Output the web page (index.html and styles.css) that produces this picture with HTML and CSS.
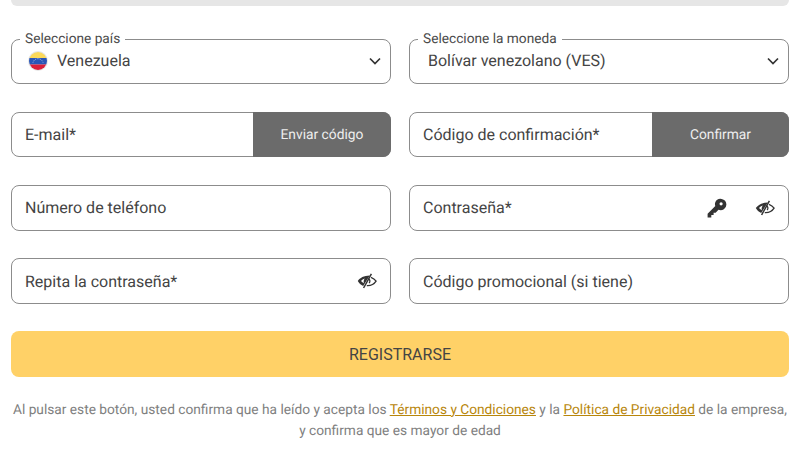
FILE: index.html
```html
<!DOCTYPE html>
<html lang="es">
<head>
<meta charset="utf-8">
<title>Registro</title>
<link rel="stylesheet" href="styles.css">
</head>
<body>
<div class="page">
  <div class="topbar"></div>
  <form class="form">
    <div class="grid">
      <div class="field select">
        <span class="legend">Seleccione país</span>
        <svg class="flag" viewBox="0 0 20 20" width="20" height="20" aria-hidden="true">
          <defs><clipPath id="c"><circle cx="10" cy="10" r="9"/></clipPath></defs>
          <circle cx="10" cy="10" r="10" fill="#e6e6e6"/>
          <g clip-path="url(#c)">
            <rect width="20" height="7" fill="#fcd95a"/>
            <rect y="7" width="20" height="6.500" fill="#2a56b8"/>
            <rect y="13.500" width="20" height="6.500" fill="#dc1f3a"/>
          </g>
          <path d="M5 11.500a5.200 5.200 0 0 1 10 0" fill="none" stroke="#dfe6f5" stroke-width=".8" stroke-dasharray=".8 1"/>
        </svg>
        <span class="value">Venezuela</span>
        <svg class="chev" viewBox="0 0 12 8" width="12" height="8" aria-hidden="true"><path d="M1 1.500l5 5 5-5" fill="none" stroke="#333" stroke-width="1.700"/></svg>
      </div>
      <div class="field select">
        <span class="legend">Seleccione la moneda</span>
        <span class="value currency">Bolívar venezolano (VES)</span>
        <svg class="chev" viewBox="0 0 12 8" width="12" height="8" aria-hidden="true"><path d="M1 1.500l5 5 5-5" fill="none" stroke="#333" stroke-width="1.700"/></svg>
      </div>
      <div class="field">
        <span class="text">E-mail*</span>
        <span class="action action-email">Enviar código</span>
      </div>
      <div class="field">
        <span class="text">Código de confirmación*</span>
        <span class="action action-confirm">Confirmar</span>
      </div>
      <div class="field"><span class="text">Número de teléfono</span></div>
      <div class="field">
        <span class="text">Contraseña*</span>
        <svg class="key" viewBox="0 0 20 20" width="20" height="20" aria-hidden="true"><path d="M19.400 6.400a5.800 5.800 0 0 0-11.200-1.900c-.4 1.200-.3 2.500.1 3.600L.6 15.800v3.600h3.700v-2.300h2.300v-2.300h2l2.900-3a5.800 5.800 0 0 0 7.900-5.400zm-3.700-.6a1.600 1.600 0 1 1-3.200 0 1.600 1.600 0 0 1 3.200 0z" fill="#333" fill-rule="evenodd"/></svg>
        <svg class="eye" viewBox="0 0 20 16" width="20" height="16" aria-hidden="true"><use href="#eye-off"/></svg>
      </div>
      <div class="field">
        <span class="text">Repita la contraseña*</span>
        <svg class="eye" viewBox="0 0 20 16" width="20" height="16" aria-hidden="true">
          <g id="eye-off">
            <path d="M.8 8C3 4.800 6.800 2.600 12.800 2.500L6.200 13C3.800 12 2 10.200.8 8zm3.200 0c.9 1 1.800 1.700 2.900 2.200-.5-1.700-.2-3.400.9-4.800C6.200 6 5 6.800 4 8z" fill="#333" fill-rule="evenodd"/>
            <path d="M14.400 .8L6.600 15" stroke="#333" stroke-width="1.500" fill="none"/>
            <path d="M14 4.300c2.200.8 3.900 2.100 5.100 3.800-1.900 2.900-5 4.800-9.300 4.500M11.800 5.800c1.300 1.100 1.500 3 .3 4.300" stroke="#333" stroke-width="1.300" fill="none"/>
          </g>
        </svg>
      </div>
      <div class="field"><span class="text">Código promocional (si tiene)</span></div>
    </div>
    <button class="submit" type="button">REGISTRARSE</button>
    <p class="note">Al pulsar este botón, usted confirma que ha leído y acepta los <a href="#">Términos y Condiciones</a> y la <a href="#">Política de Privacidad</a> de la empresa, y confirma que es mayor de edad</p>
  </form>
</div>
</body>
</html>
```
FILE: styles.css
```css
* { box-sizing: border-box; }
html, body { margin: 0; padding: 0; background: #fff; }
body { font-family: Roboto, "Liberation Sans", sans-serif; color: #444; width: 800px; height: 450px; overflow: hidden; text-rendering: geometricPrecision; }
.page { padding: 0 11px; }
.topbar { height: 6px; background: #e6e6e6; border-radius: 0 0 8px 8px; }
.form { margin-top: 32.5px; }
.grid { display: grid; grid-template-columns: 380px 380px; column-gap: 18px; row-gap: 27.800px; }
.field { position: relative; height: 45.500px; border: 1px solid #8c8c8c; border-radius: 8px; display: flex; align-items: center; padding: 0 13px; font-size: 16px; }
.select { padding-bottom: 1px; }
.legend { position: absolute; left: 8px; top: -9px; padding: 0 5px; background: #fff; font-size: 13.700px; line-height: 16px; color: #4a4a4a; }
.flag { margin: 0 9px 0 3px; flex: none; }
.value { flex: 1; }
.currency { padding-left: 5px; }
.chev { flex: none; margin-right: -4px; }
.text { flex: 1; }
.action { position: absolute; right: -1px; top: -1px; bottom: -1px; background: #6b6b6b; color: #eee; font-size: 13.800px; border-radius: 0 8px 8px 0; display: flex; align-items: center; justify-content: center; }
.action-email { width: 138px; }
.action-confirm { width: 137px; }
.key { flex: none; margin-right: 28px; }
.eye { flex: none; margin-right: 0; }
.submit { display: block; width: 100%; height: 45.500px; margin-top: 27.500px; border: 0; border-radius: 8px; background: #ffd167; color: #444; font: 16px Roboto, "Liberation Sans", sans-serif; }
.note { margin: 23px 0 0; text-align: center; font-size: 13.720px; line-height: 21px; color: #808080; }
.note a { color: #b8860b; text-decoration: underline; }
```
